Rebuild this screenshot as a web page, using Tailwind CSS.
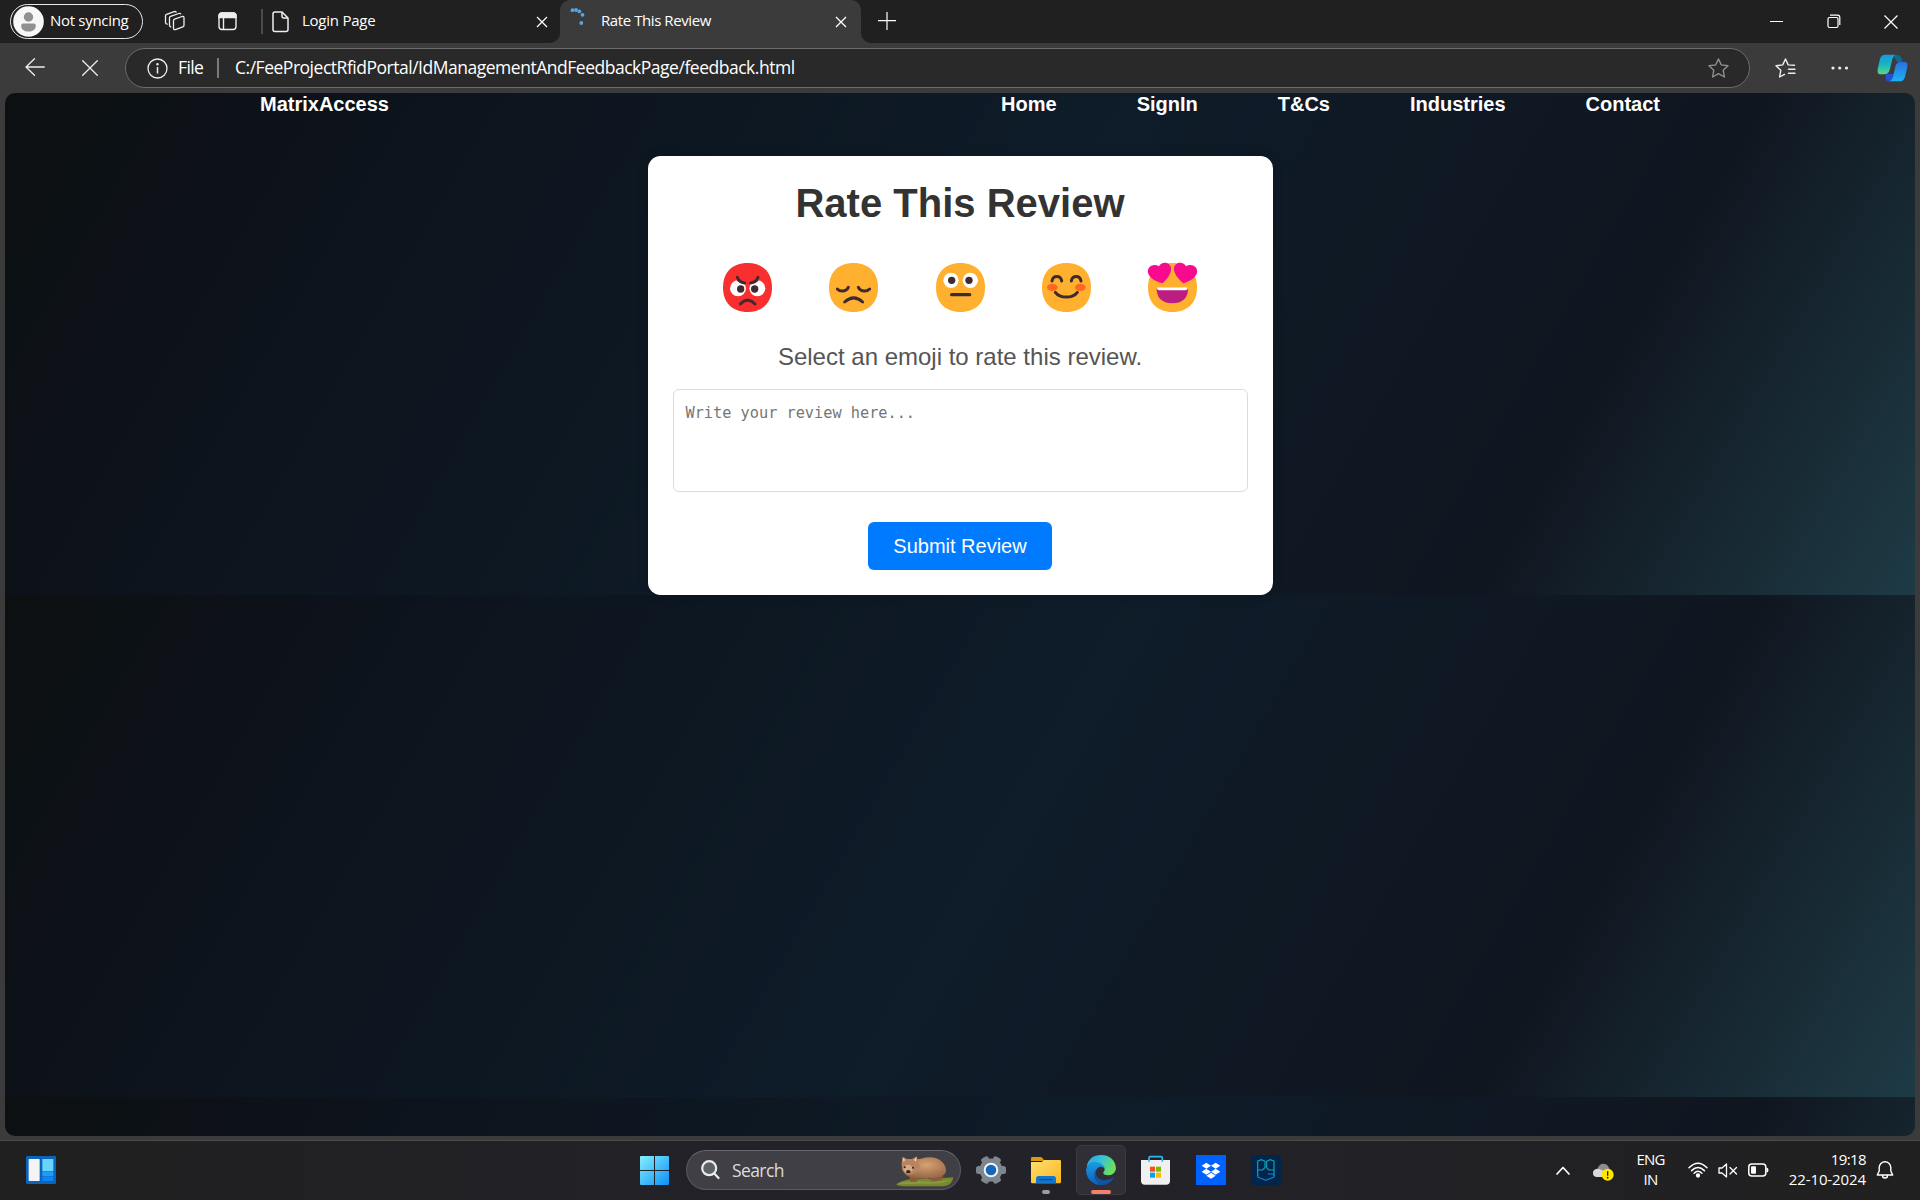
<!DOCTYPE html>
<html lang="en">
<head>
<meta charset="utf-8">
<title>Rate This Review</title>
<script src="https://cdn.jsdelivr.net/npm/@tailwindcss/browser@4"></script>
</head>
<body class="w-[1920px] h-[1200px] overflow-hidden flex flex-col bg-[#3b3b3b] text-white font-['Open_Sans',sans-serif]">

<!-- Title bar -->
<header class="h-[43px] shrink-0 flex bg-[#202020] text-[15px] leading-5">
  <div class="mt-1 ml-2.5 w-[133px] h-[35px] rounded-full border border-[#e8e8e8] flex items-center shrink-0">
    <svg class="ml-0.5 size-[31px] shrink-0" viewBox="0 0 31 31"><circle cx="15.500" cy="15.500" r="15.300" fill="#f7f7f7"/><circle cx="15.500" cy="11" r="4.700" fill="#909090"/><path d="M8.200 19.500q0-2 2-2h10.600q2 0 2 2c0 4-3 6-7.300 6s-7.300-2-7.300-6Z" fill="#909090"/></svg>
    <span class="ml-[6px] -mt-1 tracking-[-0.3px] whitespace-nowrap">Not syncing</span>
  </div>
  <svg class="ml-[21px] mt-[10px] w-[22px] h-[22px] shrink-0" viewBox="0 0 22 22" fill="none" stroke="#eee" stroke-width="1.300" stroke-linejoin="round" stroke-linecap="round"><path d="M9.500 9.200q0-1.200 1.100-1.600l7.500-2.600q1.900-.5 1.900 1.400v7.400q0 1.200-1.200 1.600l-7.300 2.700q-2 .5-2-1.500Z" transform="translate(0 1.500)"/><path d="M6.800 16.800q-1.300-.3-1.300-1.500V8q0-1.200 1.100-1.600l8.200-2.900q1.300-.4 1.900.3"/><path d="M3.200 14.200q-1.700-.4-1.700-1.700V5.900q0-1.200 1.100-1.600l7.600-2.700q1.300-.3 1.900.4"/></svg>
  <svg class="ml-[32px] mt-[12px] w-[19px] h-[19px] shrink-0" viewBox="0 0 19 19" fill="none" stroke="#eee" stroke-width="1.400"><rect x="1" y="1" width="17" height="16.500" rx="3"/><path d="M1 4a3 3 0 0 1 3-3h11a3 3 0 0 1 3 3v1.500H1Z" fill="#eee"/><path d="M5.500 5v12"/></svg>
  <div class="ml-[24px] mt-[9px] w-0.5 h-[25px] bg-[#4b4b4b] shrink-0"></div>
  <svg class="ml-[9px] mt-[11px] w-[17px] h-[22px] shrink-0" viewBox="0 0 17 22" fill="none" stroke="#eee" stroke-width="1.500" stroke-linejoin="round"><path d="M3 1h7l6 6v11.500a2 2 0 0 1-2 2H3a2 2 0 0 1-2-2V3a2 2 0 0 1 2-2Z"/><path d="M10 1v4.500a1.500 1.500 0 0 0 1.500 1.500H16"/></svg>
  <span class="ml-[13px] mt-[10px] w-[234px] tracking-[-0.25px]">Login Page</span>
  <svg class="mt-[16px] w-3 h-3 shrink-0" viewBox="0 0 12 12" stroke="#fff" stroke-width="1.300"><path d="M1 1l10 10M11 1 1 11"/></svg>
  <svg class="ml-[2px] mt-[33px] w-[10px] h-[10px] shrink-0" viewBox="0 0 10 10"><path d="M10 0v10H0A10 10 0 0 0 10 0Z" fill="#3b3b3b"/></svg>
  <div class="w-[301px] h-[43px] rounded-t-[10px] bg-[#3b3b3b] flex shrink-0">
    <svg class="ml-[10px] mt-[7px] w-[18px] h-[20px] shrink-0" viewBox="0 0 18 20" fill="#5aa5e0"><circle cx="2.500" cy="3.200" r="1.900"/><circle cx="6" cy="3" r="1.900"/><circle cx="9.300" cy="4.300" r="1.900"/><circle cx="12.500" cy="7.800" r="1.900"/><circle cx="11.300" cy="16" r="1.900"/></svg>
    <span class="ml-[13px] mt-[10px] w-[234px] tracking-[-0.42px]">Rate This Review</span>
    <svg class="mt-[16px] w-3 h-3 shrink-0" viewBox="0 0 12 12" stroke="#fff" stroke-width="1.300"><path d="M1 1l10 10M11 1 1 11"/></svg>
  </div>
  <svg class="mt-[33px] w-[10px] h-[10px] shrink-0" viewBox="0 0 10 10"><path d="M0 0v10h10A10 10 0 0 1 0 0Z" fill="#3b3b3b"/></svg>
  <svg class="ml-[7px] mt-[12px] w-[18px] h-[18px] shrink-0" viewBox="0 0 18 18" stroke="#fff" stroke-width="1.200"><path d="M9 0v18M0 8.600h18"/></svg>
  <div class="flex-1"></div>
  <div class="mt-[21px] w-[13px] h-[1px] shrink-0 bg-white"></div>
  <svg class="ml-[44px] mt-[14px] w-[14px] h-[15px] shrink-0" viewBox="0 0 14 15" fill="none" stroke="#fff" stroke-width="1.200"><rect x="1" y="3.500" width="10" height="10" rx="1.500"/><path d="M3 1.200h7.500a2.300 2.300 0 0 1 2.300 2.300V11"/></svg>
  <svg class="ml-[43px] mt-[15px] mr-[22px] w-[14px] h-[14px] shrink-0" viewBox="0 0 14 14" stroke="#fff" stroke-width="1.200"><path d="M.5.500l13 13M13.500.500l-13 13"/></svg>
</header>

<!-- Toolbar -->
<div class="h-[50px] shrink-0 flex items-center text-[17.5px] leading-6">
  <svg class="ml-[25px] mt-[-2px] w-[20px] h-[18px]" viewBox="0 0 20 18" fill="none" stroke="#eee" stroke-width="1.300" stroke-linecap="round" stroke-linejoin="round"><path d="M19.300 9H1M9.500.800 1 9l8.500 8.200"/></svg>
  <svg class="ml-[37px] w-4 h-4" viewBox="0 0 16 16" stroke="#eee" stroke-width="1.300" stroke-linecap="round"><path d="M.7.700l14.600 14.600M15.300.700.700 15.300"/></svg>
  <div class="ml-[27px] w-[1625px] h-10 rounded-full border border-[#6b6b6b] bg-[#292929] flex items-center">
    <svg class="ml-[21px] w-[21px] h-[21px]" viewBox="0 0 21 21" fill="none" stroke="#eee" stroke-width="1.300"><circle cx="10.500" cy="10.500" r="9.500"/><path d="M10.500 9v6.500" stroke-width="1.500"/><circle cx="10.500" cy="6.300" r=".6" fill="#eee"/></svg>
    <span class="ml-[10px] -mt-0.5 w-[39px] tracking-[-0.6px]">File</span>
    <span class="w-0.5 h-5 bg-[#7a7a7a]"></span>
    <span class="ml-4 -mt-0.5 tracking-[-0.48px]">C:/FeeProjectRfidPortal/IdManagementAndFeedbackPage/feedback.html</span>
    <svg class="ml-auto mr-5 w-[21px] h-[20px]" viewBox="0 0 21 20" fill="none" stroke="#8f8f8f" stroke-width="1.400" stroke-linejoin="round"><path d="M10.500 1 13.300 6.900 20 7.800 15.200 12.200 16.400 19 10.500 15.700 4.600 19 5.800 12.200 1 7.800 7.700 6.900Z"/></svg>
  </div>
  <svg class="ml-[25px] w-[21px] h-[20px]" viewBox="0 0 21 20" fill="none" stroke="#eee" stroke-width="1.400" stroke-linejoin="round" stroke-linecap="round"><path d="M19.500 7.300 13.200 6.900 10.500 1 7.700 6.900 1 7.800 5.800 12.200 4.600 19 9.500 16.400M13.500 11.300h6.500M13.500 15.200h6.500"/></svg>
  <svg class="ml-[35px] w-[18px] h-1" viewBox="0 0 18 4" fill="#eee"><circle cx="2" cy="2" r="1.600"/><circle cx="8.700" cy="2" r="1.600"/><circle cx="15.500" cy="2" r="1.600"/></svg>
  <svg class="ml-[28px] w-[32px] h-[28px]" viewBox="0 0 96 84">
    <defs><linearGradient id="cp1" x1="0" y1="0" x2="0" y2="1"><stop offset="0" stop-color="#1799e0"/><stop offset=".5" stop-color="#19b5c0"/><stop offset="1" stop-color="#5fd680"/></linearGradient><linearGradient id="cp2" x1="0" y1="0" x2="0" y2="1"><stop offset="0" stop-color="#2c6fe0"/><stop offset="1" stop-color="#18b4f4"/></linearGradient></defs>
    <path d="M48 3h14q8 0 11 8l4 13H60Z" fill="#0a6a94"/><path d="M26 60h24l-8 22h-8q-6 0-8-8Z" fill="#2450d8"/>
    <path d="M24 2h31q-6 4-9 14L38 48q-4 13-17 13H10Q0 61 2 46L9 14Q13 2 24 2Z" fill="url(#cp1)"/>
    <path d="M69 24h13q12 0 9 15l-7 29q-4 14-16 14H37q8-3 11-14l7-30q4-14 14-14Z" fill="url(#cp2)"/>
  </svg>
</div>

<!-- Page viewport -->
<div class="ml-[5px] w-[1910px] h-[1043px] shrink-0 rounded-[10px] overflow-hidden bg-[linear-gradient(120deg,#0c1011_0%,#0d121a_14%,#0e1c29_50%,#101620_80%,#1e3b45_100%)] [background-size:100%_502px] flex flex-col items-center font-['Liberation_Sans',Arial,sans-serif]">
  <nav class="w-full h-[63px] shrink-0 flex px-[255px] text-[20px] leading-[23px] font-bold">
    <span class="mr-auto">MatrixAccess</span>
    <div class="flex gap-20"><span>Home</span><span>SignIn</span><span>T&amp;Cs</span><span>Industries</span><span>Contact</span></div>
  </nav>
  <main class="w-[625px] h-[439px] shrink-0 rounded-[12.5px] bg-white px-[25px] pt-[24px] flex flex-col items-center shadow-[0_0_12px_rgba(0,0,0,0.15)]">
    <h1 class="text-[40px] leading-[46px] font-bold text-[#333]">Rate This Review</h1>
    <div class="mt-[36.500px] flex gap-[57.200px]">
      <svg class="size-[49px]" viewBox="0 0 147 147" fill="none" stroke="#402a32" stroke-width="9" stroke-linecap="round">
        <path stroke="none" fill="#f92f2f" d="M73.500 0C119 0 147 28 147 73.500S119 147 73.500 147 0 119 0 73.500 28 0 73.500 0Z"/>
        <g stroke="none"><circle cx="45" cy="76" r="24" fill="#fff"/><circle cx="103" cy="76" r="24" fill="#fff"/><path d="M30 40 46 57 66 64H82L102 57 118 40Z" fill="#f92f2f"/><circle cx="53" cy="78" r="11" fill="#402a32"/><circle cx="95" cy="78" r="11" fill="#402a32"/></g>
        <path d="M43 43Q49 59 65 60M105 43Q99 59 83 60"/><path d="M52 123Q74 100 96 123"/>
      </svg>
      <svg class="size-[49px]" viewBox="0 0 147 147" fill="none" stroke="#402a32" stroke-width="9" stroke-linecap="round">
        <path stroke="none" fill="#ffb02e" d="M73.500 0C119 0 147 28 147 73.500S119 147 73.500 147 0 119 0 73.500 28 0 73.500 0Z"/>
        <path d="M25 78C34 88 52 86 58 73M88 73C94 86 112 88 122 78M47 117Q74 92 101 117"/>
      </svg>
      <svg class="size-[49px]" viewBox="0 0 147 147">
        <path fill="#ffb02e" d="M73.500 0C119 0 147 28 147 73.500S119 147 73.500 147 0 119 0 73.500 28 0 73.500 0Z"/>
        <circle cx="45" cy="52" r="23" fill="#fff"/><circle cx="103" cy="52" r="23" fill="#fff"/><circle cx="47" cy="52" r="11" fill="#402a32"/><circle cx="99" cy="52" r="11" fill="#402a32"/><rect x="42" y="90" width="64" height="10" rx="5" fill="#402a32"/>
      </svg>
      <svg class="size-[49px]" viewBox="0 0 147 147" fill="none" stroke="#402a32" stroke-width="9" stroke-linecap="round">
        <path stroke="none" fill="#ffb02e" d="M73.500 0C119 0 147 28 147 73.500S119 147 73.500 147 0 119 0 73.500 28 0 73.500 0Z"/>
        <g stroke="none" fill="#ff6723"><ellipse cx="31" cy="73" rx="16" ry="11"/><ellipse cx="115" cy="73" rx="16" ry="11"/></g>
        <path d="M30 54C33 36 56 36 59 54M88 54C91 36 114 36 117 54M40 88C54 107 92 107 106 88"/>
      </svg>
      <svg class="size-[49px] overflow-visible" viewBox="0 0 147 147">
        <path fill="#ffb02e" d="M73.500 0C119 0 147 28 147 73.500S119 147 73.500 147 0 119 0 73.500 28 0 73.500 0Z"/>
        <path d="M26 73H120Q122 120 73 121 24 120 26 73Z" fill="#bb1d80"/><path d="M26 73H120Q119 82 112 82H34Q27 82 26 73Z" fill="#fff"/>
        <path d="M44 61C28 57 6 48 0 30-4 10 18 0 33 10 40-6 66-4 69 15 71 32 56 50 44 61Z" fill="#f70a8d"/><path transform="translate(147 0) scale(-1 1)" d="M41 61C28 57 6 48 0 30-4 10 18 0 33 10 40-6 66-4 69 15 71 32 54 50 41 61Z" fill="#f70a8d"/>
      </svg>
    </div>
    <p class="mt-[31.500px] text-[24px] leading-[28px] text-[#555]">Select an emoji to rate this review.</p>
    <div class="mt-[18px] w-[575px] h-[103px] shrink-0 rounded-[6px] border border-[#dcdcdc] px-[12px] pt-[13px] text-[15.25px] leading-5 text-[#757575] font-['DejaVu_Sans_Mono',monospace]">Write your review here...</div>
    <button class="mt-[30px] w-[184px] h-12 shrink-0 rounded-[6px] bg-[#007bff] text-[20px] leading-[23px] text-white">Submit Review</button>
  </main>
</div>

<!-- Taskbar -->
<footer class="mt-[4px] h-[60px] shrink-0 border-t border-[#4a4a4a] bg-linear-to-r from-[#202020] via-[#23222a] to-[#202020] flex items-center pb-px">
  <svg class="ml-[26px] w-[30px] h-[28px] shrink-0" viewBox="0 0 90 84"><rect width="90" height="84" rx="4" fill="#0b63bd"/><rect x="8" y="9" width="33" height="66" rx="2" fill="#f4f4f4"/><rect x="49" y="9" width="33" height="36" fill="#67d5fb"/><rect x="49" y="46" width="33" height="14" fill="#1f9df5"/><rect x="49" y="61" width="33" height="14" fill="#0e86ee"/></svg>
  <svg class="ml-[584px] w-[29px] h-[29px] shrink-0" viewBox="0 0 87 87"><defs><linearGradient id="win" gradientUnits="userSpaceOnUse" x1="0" y1="0" x2="87" y2="87"><stop offset="0" stop-color="#85f0ff"/><stop offset="1" stop-color="#0a90f5"/></linearGradient></defs><path fill="url(#win)" d="M3 0H42V42H0V3Q0 0 3 0ZM45 0H84Q87 0 87 3V42H45ZM0 45H42V87H3Q0 87 0 84ZM45 45H87V84Q87 87 84 87H45Z"/></svg>
  <div class="ml-[17px] w-[275px] h-10 shrink-0 rounded-full border border-[#5a595f] border-t-[#68676d] bg-[#403f45] flex items-center text-[17.5px] text-[#dcdcdc]">
    <svg class="ml-[14px] w-[19px] h-[20px]" viewBox="0 0 19 20" fill="none" stroke="#ececec" stroke-width="2.200" stroke-linecap="round"><circle cx="8.200" cy="8.200" r="7" fill="#5c6268"/><path d="M13.300 13.500 17.500 18"/></svg>
    <span class="ml-[12px] leading-6 tracking-[-0.6px]">Search</span>
    <svg class="ml-auto mr-[6px] mt-0.5 w-[58px] h-[32px]" viewBox="0 0 174 96">
      <defs><radialGradient id="fur" cx=".55" cy=".35" r=".7"><stop offset="0" stop-color="#d6a273"/><stop offset="1" stop-color="#8f6040"/></radialGradient></defs>
      <path d="M1 88Q30 66 100 72L172 67Q170 92 140 94H40Q2 94 1 88Z" fill="#77892f"/><path d="M1 88Q30 74 110 80L166 74Q150 86 100 86Z" fill="#97a445" opacity=".6"/>
      <path d="M40 55 42 80H62L70 62ZM105 55V79H118L128 76 138 76 144 50Z" fill="#8a5a3e"/>
      <path d="M30 14C50 16 62 12 75 11 98 4 124 6 138 20 152 34 152 50 146 58 136 68 118 68 90 72L62 68C40 70 24 60 18 42Z" fill="url(#fur)"/>
      <path d="M17 22 20 5 33 12 48 12 63 4 64 20Q76 30 68 46 52 60 36 60 14 48 17 22Z" fill="#b98560"/><ellipse cx="36" cy="42" rx="14" ry="13" fill="#d5ab86"/>
      <path d="M20 8 28 15 22 20ZM62 6 54 15 60 20Z" fill="#f0d0ba"/><ellipse cx="37" cy="50" rx="7" ry="5" fill="#3f2620"/><circle cx="26" cy="37" r="3" fill="#37211b"/><circle cx="51" cy="38" r="3" fill="#37211b"/>
    </svg>
  </div>
  <!-- Settings -->
  <svg class="ml-[15px] w-[30px] h-[30px] shrink-0" viewBox="0 0 30 30"><g fill="#7d868e"><circle cx="15" cy="15" r="11.500"/><rect x="11" y="0.500" width="8" height="29" rx="2.500" transform="rotate(30 15 15)"/><rect x="11" y="0" width="8" height="30" rx="2.500" transform="rotate(90 15 15)"/><rect x="11" y="0.500" width="8" height="29" rx="2.500" transform="rotate(150 15 15)"/></g><circle cx="15" cy="15" r="6.300" fill="#1367b8" stroke="#f0f4f7" stroke-width="2"/></svg>
  <!-- File Explorer -->
  <div class="ml-[25px] w-[30px] h-[50px] shrink-0 flex flex-col items-center">
    <svg class="mt-[12px] w-[30px] h-[27px]" viewBox="0 0 90 81"><defs><linearGradient id="fold" x1="0" y1="0" x2="1" y2="1"><stop offset="0" stop-color="#ffe070"/><stop offset="1" stop-color="#f8b520"/></linearGradient></defs><path d="M0 4Q0 0 4 0H28Q32 0 35 4L40 12H0Z" fill="#d99a08"/><path d="M0 15H32L40 9H86Q90 9 90 13V75Q90 79 86 79H4Q0 79 0 75Z" fill="url(#fold)"/><path d="M15 79V65Q15 57 23 57H67Q75 57 75 65V79Z" fill="#1177cc"/><path d="M27 68H63" stroke="#0a4f94" stroke-width="4" stroke-linecap="round"/></svg>
    <span class="mt-[6px] w-2 h-1 rounded-full bg-[#9b9b9f]"></span>
  </div>
  <!-- Edge -->
  <div class="ml-[15px] w-[50px] h-[50px] shrink-0 rounded-[5px] border border-[#3b3a42] bg-[#302f38] flex flex-col items-center">
    <svg class="mt-[9px] w-[30px] h-[30px] shrink-0" viewBox="0 0 90 90">
      <defs><linearGradient id="e1" x1="0" y1="0" x2="1" y2=".4"><stop offset="0" stop-color="#2aa5e0"/><stop offset=".5" stop-color="#35c1d8"/><stop offset="1" stop-color="#6be05a"/></linearGradient><linearGradient id="e2" x1="0" y1="0" x2="0" y2="1"><stop offset="0" stop-color="#1b9de2"/><stop offset="1" stop-color="#0e5fb8"/></linearGradient></defs>
      <path d="M2 34Q10 0 46 0 86 2 90 40 88 60 68 61 50 61 52 52 60 44 52 34 30 14 2 34Z" fill="url(#e1)"/>
      <path d="M0 44Q4 20 28 20 50 22 56 40 40 28 30 46 24 70 52 88 40 92 26 86 0 74 0 44Z" fill="url(#e2)"/>
      <path d="M31 44Q24 66 46 74 66 80 84 67 72 90 48 90 24 84 24 58 25 48 31 44Z" fill="#1254a4"/>
    </svg>
    <span class="mt-[5px] w-5 h-1 shrink-0 rounded-full bg-[#f4806a]"></span>
  </div>
  <!-- Microsoft Store -->
  <svg class="ml-[15px] w-[29px] h-[30px] shrink-0" viewBox="0 0 87 90"><path d="M24 20V9Q24 5 28 5H60Q64 5 64 9V20" fill="none" stroke="#30b6ee" stroke-width="5"/><path d="M0 15H87V77Q87 89 75 89H12Q0 89 0 77Z" fill="#f0f0f0"/><path d="M24 20V14M64 20V14" stroke="#30b6ee" stroke-width="5"/><path d="M27 35H42V50H27Z" fill="#f25022"/><path d="M45 35H60V50H45Z" fill="#7fba00"/><path d="M27 53H42V68H27Z" fill="#00a4ef"/><path d="M45 53H60V68H45Z" fill="#ffb900"/></svg>
  <!-- Dropbox -->
  <svg class="ml-[26px] w-[30px] h-[30px] shrink-0" viewBox="0 0 90 90"><rect width="90" height="90" fill="#0061fe"/><path fill="#fff" d="M31 23 45 32 31 41 17 32ZM59 23 73 32 59 41 45 32ZM31 41 45 50 31 59 17 50ZM59 41 73 50 59 59 45 50ZM45 53 59 62 45 71 31 62Z"/></svg>
  <!-- PG -->
  <svg class="ml-[25px] w-[30px] h-[30px] shrink-0" viewBox="0 0 90 90" fill="none" stroke="#12a3b5" stroke-width="3.500" stroke-linejoin="round"><rect width="90" height="90" fill="#02254c" stroke="none"/><path d="M20 64V18L32 14 42 19V38L34 45H20M69 45H54L47 38V19L57 14 69 18V64"/><path d="M20 58V66L44 76 69 66V58M50 57H69" stroke="#1480cf"/></svg>
  <div class="flex-1"></div>
  <!-- System tray -->
  <svg class="mr-[23px] w-[14px] h-[9px] shrink-0" viewBox="0 0 14 9" fill="none" stroke="#fff" stroke-width="1.700" stroke-linecap="round" stroke-linejoin="round"><path d="M1 8 7 1.500 13 8"/></svg>
  <svg class="mr-[22px] mt-[3px] w-[21px] h-[18px] shrink-0" viewBox="0 0 63 54"><path d="M14 42Q0 42 0 29 1 18 14 17 18 2 32 2 45 3 48 16 58 22 56 34L50 42Z" fill="#8d8d8d"/><path d="M14 42Q0 42 0 29 1 18 14 17 24 17 36 28L30 42Z" fill="#d8d8d8"/><circle cx="44" cy="35" r="18" fill="#ffe600"/><path d="M44 25V38" stroke="#222" stroke-width="4"/><circle cx="44" cy="44" r="2.500" fill="#222"/></svg>
  <div class="mr-[23px] mt-[-2px] w-[29px] text-center text-[15px] leading-5 tracking-[-0.8px]"><div>ENG</div><div>IN</div></div>
  <svg class="w-[20px] h-[16px] shrink-0" viewBox="0 0 20 16" fill="none" stroke="#fff" stroke-width="1.500" stroke-linecap="round"><path d="M1 5.800Q10-3.200 19 5.800M3.600 8.600Q10 2.200 16.400 8.600M6.100 11.200Q10 7.300 13.900 11.200"/><circle cx="10" cy="13.500" r="1.400" fill="#fff"/></svg>
  <svg class="ml-[10px] w-[20px] h-[15px] shrink-0" viewBox="0 0 20 15" fill="none" stroke="#fff" stroke-width="1.300" stroke-linejoin="round" stroke-linecap="round"><path d="M1 5H4L8.500 1V14L4 10H1ZM12 4.500 18.500 11M18.500 4.500 12 11"/></svg>
  <svg class="ml-[10px] w-[21px] h-[14px] shrink-0" viewBox="0 0 21 14"><rect x=".8" y="1" width="17" height="12" rx="3" fill="none" stroke="#fff" stroke-width="1.500"/><rect x="3" y="3.200" width="5" height="7.600" rx="1" fill="#fff"/><path d="M18.500 4.500Q20.500 4.500 20.500 7T18.500 9.500Z" fill="#fff"/></svg>
  <div class="ml-[15px] mt-[-3px] w-[82px] text-right text-[15px] leading-5 tracking-[-0.1px]"><div class="tracking-[-0.6px]">19:18</div><div>22-10-2024</div></div>
  <svg class="ml-[10px] mr-[26px] w-[18px] h-[20px] shrink-0" viewBox="0 0 18 20" fill="none" stroke="#fff" stroke-width="1.400" stroke-linejoin="round"><path d="M3.200 7.500a5.800 5.800 0 0 1 11.600 0V11l1.900 4H1.300L3.200 11ZM6.500 15.500a2.500 2.500 0 0 0 5 0"/></svg>
</footer>
</body>
</html>
